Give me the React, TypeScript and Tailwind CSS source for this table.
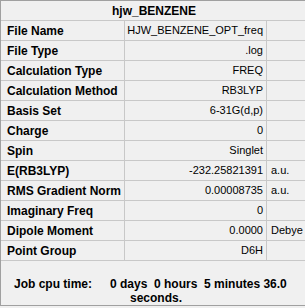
const rows: [string, string, string][] = [
  ["File Name", "HJW_BENZENE_OPT_freq", ""],
  ["File Type", ".log", ""],
  ["Calculation Type", "FREQ", ""],
  ["Calculation Method", "RB3LYP", ""],
  ["Basis Set", "6-31G(d,p)", ""],
  ["Charge", "0", ""],
  ["Spin", "Singlet", ""],
  ["E(RB3LYP)", "-232.25821391", "a.u."],
  ["RMS Gradient Norm", "0.00008735", "a.u."],
  ["Imaginary Freq", "0", ""],
  ["Dipole Moment", "0.0000", "Debye"],
  ["Point Group", "D6H", ""],
]

export default function App() {
  return (
    <div className="w-[305px] h-[308px] overflow-hidden bg-[#f0f0f0] font-['Liberation_Sans',Arial,sans-serif] text-black">
      <div className="w-[308px] border border-[#a0a0a0] bg-[#f0f0f0]">
        <div className="flex h-[20px] items-center justify-center border-b border-[#c8c8c8] text-[12px] font-bold">
          hjw_BENZENE
        </div>

        {rows.map(([label, value, unit]) => (
          <div
            key={label}
            className="grid h-[20px] grid-cols-[124px_142px_1fr] border-b border-[#c8c8c8]"
          >
            <div className="flex items-center border-r border-[#c8c8c8] pl-[6px] text-[12px] font-bold whitespace-nowrap">
              {label}
            </div>
            <div className="flex items-center justify-end border-r border-[#c8c8c8] pr-[3px] text-[11px] whitespace-nowrap">
              {value}
            </div>
            <div className="flex items-center pl-[4px] text-[11px] whitespace-nowrap">
              {unit}
            </div>
          </div>
        ))}

        <div className="h-[44px] pt-[16px] text-[12px] font-bold leading-[14px]">
          <div className="flex">
            <span className="w-[109px] pl-[13px]">Job cpu time:</span>
            <span className="whitespace-pre">0 days  0 hours  5 minutes 36.0</span>
          </div>
          <div className="pl-[129px]">seconds.</div>
        </div>
      </div>
    </div>
  )
}
